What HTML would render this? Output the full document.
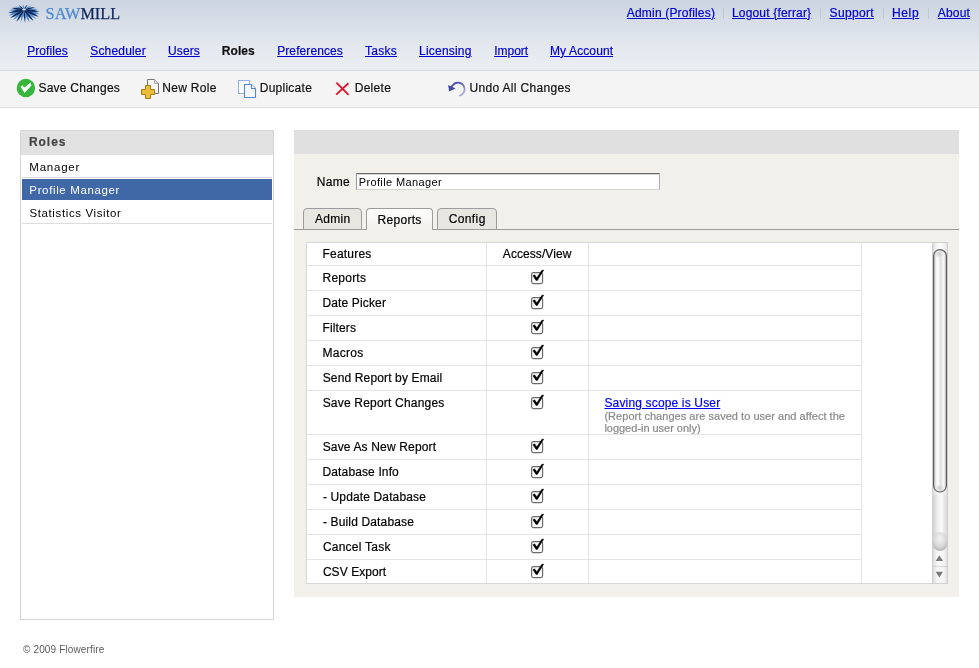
<!DOCTYPE html>
<html><head><meta charset="utf-8">
<style>
*{box-sizing:border-box;margin:0;padding:0}
html,body{width:979px;height:668px;overflow:hidden;background:#fff;font-family:"Liberation Sans",sans-serif;font-size:12px;color:#000}
.t{position:absolute;white-space:nowrap;line-height:16px;font-family:"Liberation Sans",sans-serif;-webkit-text-stroke:0.2px currentColor}
.a{position:absolute}
svg{position:absolute;overflow:visible}
</style></head><body>
<!-- header -->
<div class="a" style="left:0;top:0;width:979px;height:70px;background:linear-gradient(#cbd4e0 0px,#d6dde7 20px,#e3e8ee 45px,#ebeef3 69px)"></div>
<div class="a" style="left:0;top:70px;width:979px;height:1px;background:#d2d9e1"></div>
<div class="a" style="left:0;top:71px;width:979px;height:36px;background:#f4f4f4"></div>
<div class="a" style="left:0;top:107px;width:979px;height:1px;background:#dedede"></div>
<!-- separators -->
<div class="a" style="left:723px;top:8px;width:1px;height:11px;background:#bfc7d1"></div>
<div class="a" style="left:820px;top:8px;width:1px;height:11px;background:#bfc7d1"></div>
<div class="a" style="left:883px;top:8px;width:1px;height:11px;background:#bfc7d1"></div>
<div class="a" style="left:928px;top:8px;width:1px;height:11px;background:#bfc7d1"></div>
<!-- logo -->
<svg style="left:0;top:0;will-change:transform" width="130" height="30" viewBox="0 0 130 30">
  <g><path d="M23.95 9.99 Q31.37 14.02 39.86 14.26 Q32.49 10.05 24.05 9.61Z" fill="#4a88d2"/>
<path d="M23.88 9.96 Q29.18 16.10 36.73 19.17 Q31.55 12.88 24.12 9.64Z" fill="#4a88d2"/>
<path d="M23.82 9.88 Q25.14 16.79 29.56 22.31 Q28.42 15.33 24.18 9.72Z" fill="#4a88d2"/>
<path d="M23.81 9.75 Q20.61 15.80 20.62 22.69 Q24.01 16.69 24.19 9.85Z" fill="#4a88d2"/>
<path d="M23.86 9.65 Q17.06 13.56 12.76 20.18 Q19.70 16.42 24.14 9.95Z" fill="#4a88d2"/>
<path d="M23.93 9.61 Q15.51 10.75 8.46 15.58 Q16.95 14.63 24.07 9.99Z" fill="#4a88d2"/>
<path d="M23.99 9.60 Q16.48 8.17 9.10 10.35 Q16.62 11.98 24.01 10.00Z" fill="#4a88d2"/>
<path d="M24.07 9.61 Q19.76 6.61 14.47 6.15 Q18.71 9.34 23.93 9.99Z" fill="#4a88d2"/>
<path d="M24.20 9.76 Q24.43 6.86 22.87 4.32 Q22.44 7.27 23.80 9.84Z" fill="#4a88d2"/>
<path d="M24.10 9.97 Q28.47 8.77 31.62 5.44 Q27.15 6.47 23.90 9.63Z" fill="#4a88d2"/>
<path d="M24.01 10.00 Q31.06 11.29 37.96 9.14 Q30.89 7.65 23.99 9.60Z" fill="#4a88d2"/>
<path d="M23.91 9.98 Q30.57 15.19 38.90 16.85 Q32.33 11.46 24.09 9.62Z" fill="#0d2759"/>
<path d="M23.85 9.93 Q27.32 16.65 33.53 21.05 Q30.21 14.20 24.15 9.67Z" fill="#0d2759"/>
<path d="M23.80 9.82 Q22.83 16.49 25.13 22.88 Q26.30 16.19 24.20 9.78Z" fill="#0d2759"/>
<path d="M23.83 9.69 Q18.64 14.79 16.38 21.76 Q21.74 16.77 24.17 9.91Z" fill="#0d2759"/>
<path d="M23.90 9.63 Q15.99 12.18 10.04 18.06 Q18.06 15.68 24.10 9.97Z" fill="#0d2759"/>
<path d="M23.96 9.60 Q15.68 9.37 8.14 12.94 Q16.46 13.36 24.04 10.00Z" fill="#0d2759"/>
<path d="M24.03 9.60 Q17.87 7.22 11.27 8.03 Q17.40 10.61 23.97 10.00Z" fill="#0d2759"/>
<path d="M24.13 9.65 Q22.01 6.45 18.44 4.89 Q20.43 8.24 23.87 9.95Z" fill="#0d2759"/>
<path d="M24.17 9.91 Q26.60 7.74 27.38 4.51 Q24.78 6.57 23.83 9.69Z" fill="#0d2759"/>
<path d="M24.05 9.99 Q30.00 9.96 35.24 7.02 Q29.24 6.87 23.95 9.61Z" fill="#0d2759"/>
<path d="M23.98 10.00 Q31.54 12.68 39.54 11.62 Q32.00 8.74 24.02 9.60Z" fill="#0d2759"/>
<ellipse cx="24" cy="9.6" rx="1.8" ry="0.9" fill="#e8eef6"/></g>
  <text x="45.6" y="19.2" font-family="Liberation Serif" font-size="16.8" textLength="74.5" lengthAdjust="spacingAndGlyphs" fill="#4d88cc" stroke="#4d88cc" stroke-width="0.25">SAW<tspan fill="#12285c" stroke="#12285c">MILL</tspan></text>
</svg>
<!-- toolbar icons -->
<svg style="left:0;top:71px" width="600" height="36" viewBox="0 71 600 36">
  <circle cx="25.9" cy="88" r="9.2" fill="#37b63c"/>
  <path d="M20.6 86.8 L22.4 85.2 L24.6 87.6 L30.6 82.6 L31.4 85.4 L24.6 92.9 Z" fill="#fff"/>
  <!-- new role -->
  <path d="M147.5 79.5 H154.5 L158.5 83.5 V93.5 H147.5 Z" fill="#f6f6f6" stroke="#777" stroke-width="1"/>
  <path d="M154.5 79.5 V83.5 H158.5" fill="#ddd" stroke="#999" stroke-width="0.8"/>
  <path d="M145.5 85.5 H150.5 V89.5 H154.5 V94.5 H150.5 V98.5 H145.5 V94.5 H141.5 V89.5 H145.5 Z" fill="#ebbd38" stroke="#a47c10" stroke-width="1"/>
  <!-- duplicate -->
  <rect x="238.5" y="80.5" width="11" height="13" fill="#fbfbfb" stroke="#92b1e2" stroke-width="1"/>
  <path d="M244.5 84.5 H251.5 L255.5 88.5 V97.5 H244.5 Z" fill="#f6f6f6" stroke="#5b86d0" stroke-width="1.1"/>
  <path d="M251.5 84.5 V88.5 H255.5" fill="#fff" stroke="#5b86d0" stroke-width="1.1"/>
  <!-- delete -->
  <path d="M336.4 82.6 L348.6 94.8 M348.4 83.2 L336.2 94.6" stroke="#dc1a2c" stroke-width="1.9" stroke-linecap="butt"/>
  <!-- undo -->
  <defs><linearGradient id="ug" gradientUnits="userSpaceOnUse" x1="452" y1="84" x2="462" y2="96"><stop offset="0" stop-color="#4040a0"/><stop offset="0.5" stop-color="#7070bc"/><stop offset="1" stop-color="#b4b4dc"/></linearGradient></defs>
  <path d="M450.8 87.6 L452.5 85.6 A6.6 6.6 0 1 1 459.4 95.7" fill="none" stroke="url(#ug)" stroke-width="1.7"/>
  <path d="M448.1 85.1 L449.3 91.6 L455.6 88.5 Z" fill="#4646a4"/>
</svg>
<!-- left panel -->
<div class="a" style="left:20px;top:130px;width:254px;height:490px;border:1px solid #d5d5d5;background:#fff"></div>
<div class="a" style="left:21px;top:131px;width:252px;height:24px;background:#e1e1e1"></div>
<div class="a" style="left:22px;top:177px;width:250px;height:1px;background:#dcdcdc"></div>
<div class="a" style="left:22px;top:179px;width:250px;height:21px;background:#4068a7"></div>
<div class="a" style="left:22px;top:223px;width:250px;height:1px;background:#dcdcdc"></div>
<!-- right panel -->
<div class="a" style="left:294px;top:130px;width:665px;height:467px;background:#f1f0ea"></div>
<div class="a" style="left:294px;top:130px;width:665px;height:24px;background:#e0e0e0"></div>
<!-- input -->
<div class="a" style="left:356px;top:173px;width:304px;height:17px;background:#fff;border:1px solid #9a9a9a;border-top-color:#6a6a6a;border-right-color:#b0b0b0;border-bottom-color:#d4d4d4;box-shadow:inset 0 1px 0 #d6d6d6"></div>
<!-- tabs -->
<div class="a" style="left:294px;top:229px;width:665px;height:1px;background:#9c9c9c"></div>
<div class="a" style="left:303px;top:208px;width:59px;height:22px;background:#e8e6e0;border:1px solid #9c9c9c;border-radius:4px 4px 0 0"></div>
<div class="a" style="left:366px;top:208px;width:67px;height:22px;background:linear-gradient(#fdfdfc,#f1f0ea);border:1px solid #9c9c9c;border-bottom:none;border-radius:4px 4px 0 0"></div>
<div class="a" style="left:437px;top:208px;width:60px;height:22px;background:#e8e6e0;border:1px solid #9c9c9c;border-radius:4px 4px 0 0"></div>
<!-- table -->
<div class="a" style="left:306px;top:242px;width:642px;height:342px;background:#fff;border:1px solid #d7d7d7"></div>
<div class="a" style="left:307px;top:265px;width:555px;height:1px;background:#e4e4e4"></div>
<div class="a" style="left:307px;top:290px;width:555px;height:1px;background:#e4e4e4"></div>
<div class="a" style="left:307px;top:315px;width:555px;height:1px;background:#e4e4e4"></div>
<div class="a" style="left:307px;top:340px;width:555px;height:1px;background:#e4e4e4"></div>
<div class="a" style="left:307px;top:365px;width:555px;height:1px;background:#e4e4e4"></div>
<div class="a" style="left:307px;top:390px;width:555px;height:1px;background:#e4e4e4"></div>
<div class="a" style="left:307px;top:434px;width:555px;height:1px;background:#e4e4e4"></div>
<div class="a" style="left:307px;top:459px;width:555px;height:1px;background:#e4e4e4"></div>
<div class="a" style="left:307px;top:484px;width:555px;height:1px;background:#e4e4e4"></div>
<div class="a" style="left:307px;top:509px;width:555px;height:1px;background:#e4e4e4"></div>
<div class="a" style="left:307px;top:534px;width:555px;height:1px;background:#e4e4e4"></div>
<div class="a" style="left:307px;top:559px;width:555px;height:1px;background:#e4e4e4"></div>
<div class="a" style="left:486px;top:243px;width:1px;height:340px;background:#e4e4e4"></div>
<div class="a" style="left:588px;top:243px;width:1px;height:340px;background:#e4e4e4"></div>
<div class="a" style="left:861px;top:243px;width:1px;height:340px;background:#e4e4e4"></div>
<svg style="left:528px;top:265px" width="20" height="24" viewBox="0 0 20 24"><rect x="3.6" y="7.6" width="11" height="11" rx="1.8" fill="#fafafa" stroke="#6c6c6c" stroke-width="1.2"/><path d="M4.9 10.7 L6.6 9.8 L8.8 12.8 L13.8 5.3 L15.8 5.1 L9.4 15.4 L8.0 15.4 Z" fill="#000" stroke="#000" stroke-width="0.4"/></svg>
<svg style="left:528px;top:290px" width="20" height="24" viewBox="0 0 20 24"><rect x="3.6" y="7.6" width="11" height="11" rx="1.8" fill="#fafafa" stroke="#6c6c6c" stroke-width="1.2"/><path d="M4.9 10.7 L6.6 9.8 L8.8 12.8 L13.8 5.3 L15.8 5.1 L9.4 15.4 L8.0 15.4 Z" fill="#000" stroke="#000" stroke-width="0.4"/></svg>
<svg style="left:528px;top:315px" width="20" height="24" viewBox="0 0 20 24"><rect x="3.6" y="7.6" width="11" height="11" rx="1.8" fill="#fafafa" stroke="#6c6c6c" stroke-width="1.2"/><path d="M4.9 10.7 L6.6 9.8 L8.8 12.8 L13.8 5.3 L15.8 5.1 L9.4 15.4 L8.0 15.4 Z" fill="#000" stroke="#000" stroke-width="0.4"/></svg>
<svg style="left:528px;top:340px" width="20" height="24" viewBox="0 0 20 24"><rect x="3.6" y="7.6" width="11" height="11" rx="1.8" fill="#fafafa" stroke="#6c6c6c" stroke-width="1.2"/><path d="M4.9 10.7 L6.6 9.8 L8.8 12.8 L13.8 5.3 L15.8 5.1 L9.4 15.4 L8.0 15.4 Z" fill="#000" stroke="#000" stroke-width="0.4"/></svg>
<svg style="left:528px;top:365px" width="20" height="24" viewBox="0 0 20 24"><rect x="3.6" y="7.6" width="11" height="11" rx="1.8" fill="#fafafa" stroke="#6c6c6c" stroke-width="1.2"/><path d="M4.9 10.7 L6.6 9.8 L8.8 12.8 L13.8 5.3 L15.8 5.1 L9.4 15.4 L8.0 15.4 Z" fill="#000" stroke="#000" stroke-width="0.4"/></svg>
<svg style="left:528px;top:390px" width="20" height="24" viewBox="0 0 20 24"><rect x="3.6" y="7.6" width="11" height="11" rx="1.8" fill="#fafafa" stroke="#6c6c6c" stroke-width="1.2"/><path d="M4.9 10.7 L6.6 9.8 L8.8 12.8 L13.8 5.3 L15.8 5.1 L9.4 15.4 L8.0 15.4 Z" fill="#000" stroke="#000" stroke-width="0.4"/></svg>
<svg style="left:528px;top:434px" width="20" height="24" viewBox="0 0 20 24"><rect x="3.6" y="7.6" width="11" height="11" rx="1.8" fill="#fafafa" stroke="#6c6c6c" stroke-width="1.2"/><path d="M4.9 10.7 L6.6 9.8 L8.8 12.8 L13.8 5.3 L15.8 5.1 L9.4 15.4 L8.0 15.4 Z" fill="#000" stroke="#000" stroke-width="0.4"/></svg>
<svg style="left:528px;top:459px" width="20" height="24" viewBox="0 0 20 24"><rect x="3.6" y="7.6" width="11" height="11" rx="1.8" fill="#fafafa" stroke="#6c6c6c" stroke-width="1.2"/><path d="M4.9 10.7 L6.6 9.8 L8.8 12.8 L13.8 5.3 L15.8 5.1 L9.4 15.4 L8.0 15.4 Z" fill="#000" stroke="#000" stroke-width="0.4"/></svg>
<svg style="left:528px;top:484px" width="20" height="24" viewBox="0 0 20 24"><rect x="3.6" y="7.6" width="11" height="11" rx="1.8" fill="#fafafa" stroke="#6c6c6c" stroke-width="1.2"/><path d="M4.9 10.7 L6.6 9.8 L8.8 12.8 L13.8 5.3 L15.8 5.1 L9.4 15.4 L8.0 15.4 Z" fill="#000" stroke="#000" stroke-width="0.4"/></svg>
<svg style="left:528px;top:509px" width="20" height="24" viewBox="0 0 20 24"><rect x="3.6" y="7.6" width="11" height="11" rx="1.8" fill="#fafafa" stroke="#6c6c6c" stroke-width="1.2"/><path d="M4.9 10.7 L6.6 9.8 L8.8 12.8 L13.8 5.3 L15.8 5.1 L9.4 15.4 L8.0 15.4 Z" fill="#000" stroke="#000" stroke-width="0.4"/></svg>
<svg style="left:528px;top:534px" width="20" height="24" viewBox="0 0 20 24"><rect x="3.6" y="7.6" width="11" height="11" rx="1.8" fill="#fafafa" stroke="#6c6c6c" stroke-width="1.2"/><path d="M4.9 10.7 L6.6 9.8 L8.8 12.8 L13.8 5.3 L15.8 5.1 L9.4 15.4 L8.0 15.4 Z" fill="#000" stroke="#000" stroke-width="0.4"/></svg>
<svg style="left:528px;top:559px" width="20" height="24" viewBox="0 0 20 24"><rect x="3.6" y="7.6" width="11" height="11" rx="1.8" fill="#fafafa" stroke="#6c6c6c" stroke-width="1.2"/><path d="M4.9 10.7 L6.6 9.8 L8.8 12.8 L13.8 5.3 L15.8 5.1 L9.4 15.4 L8.0 15.4 Z" fill="#000" stroke="#000" stroke-width="0.4"/></svg>
<!-- scrollbar -->
<svg style="left:932px;top:242px" width="16" height="342" viewBox="0 0 16 342">
<defs>
<linearGradient id="trk" x1="0" x2="1" y1="0" y2="0"><stop offset="0" stop-color="#d6d6d6"/><stop offset="0.25" stop-color="#f3f3f3"/><stop offset="0.5" stop-color="#fbfbfb"/><stop offset="0.8" stop-color="#f2f2f2"/><stop offset="1" stop-color="#dcdcdc"/></linearGradient>
<linearGradient id="thm" x1="0" x2="1" y1="0" y2="0"><stop offset="0" stop-color="#bdbdbd"/><stop offset="0.2" stop-color="#f4f4f4"/><stop offset="0.35" stop-color="#fdfdfd"/><stop offset="0.55" stop-color="#dedede"/><stop offset="0.8" stop-color="#fafafa"/><stop offset="1" stop-color="#c4c4c4"/></linearGradient>
<linearGradient id="low" x1="0" x2="1" y1="0" y2="0"><stop offset="0" stop-color="#cfcfcf"/><stop offset="0.3" stop-color="#eeeeee"/><stop offset="0.6" stop-color="#fafafa"/><stop offset="1" stop-color="#d8d8d8"/></linearGradient>
<radialGradient id="cap" cx="0.5" cy="0.35" r="0.65"><stop offset="0" stop-color="#f2f2f2"/><stop offset="0.7" stop-color="#d6d6d6"/><stop offset="1" stop-color="#b4b4b4"/></radialGradient><radialGradient id="tcap" cx="0.45" cy="0.5" r="0.6"><stop offset="0" stop-color="#c8c8c8"/><stop offset="1" stop-color="#e8e8e8" stop-opacity="0"/></radialGradient>
</defs>
<rect x="0.5" y="0.5" width="15" height="341" fill="url(#trk)" stroke="#d0d0d0" stroke-width="1"/>
<rect x="1" y="250" width="14" height="59" rx="7" fill="url(#low)"/>
<rect x="1" y="290" width="14" height="19" rx="7" fill="url(#cap)"/>
<rect x="1.6" y="7.6" width="12.8" height="242.4" rx="6.4" fill="url(#thm)" stroke="#5c5c5c" stroke-width="1.2"/><ellipse cx="7.6" cy="12" rx="5" ry="4" fill="url(#tcap)"/><ellipse cx="8" cy="246" rx="5.5" ry="3.5" fill="url(#tcap)"/>
<path d="M3.7 319 L11 319 L7.35 313.3 Z" fill="#7a7a7a"/>
<rect x="1" y="324" width="14" height="1" fill="#d4d4d4"/>
<path d="M3.7 329.8 L11 329.8 L7.35 335.4 Z" fill="#7a7a7a"/>
</svg>
<div style="position:absolute;left:0;top:0;width:979px;height:668px;will-change:transform">
<span class="t" style="left:626.82px;top:4.80px;font-size:12px;color:#0000cc;letter-spacing:0.182px;text-decoration:underline">Admin (Profiles)</span>
<span class="t" style="left:732.03px;top:4.80px;font-size:12px;color:#0000cc;letter-spacing:0.166px;text-decoration:underline">Logout {ferrar}</span>
<span class="t" style="left:829.56px;top:4.80px;font-size:12px;color:#0000cc;letter-spacing:0.338px;text-decoration:underline">Support</span>
<span class="t" style="left:891.93px;top:4.80px;font-size:12px;color:#0000cc;letter-spacing:0.655px;text-decoration:underline">Help</span>
<span class="t" style="left:937.72px;top:4.80px;font-size:12px;color:#0000cc;letter-spacing:0.220px;text-decoration:underline">About</span>
<span class="t" style="left:27.20px;top:42.90px;font-size:12px;color:#0000cc;letter-spacing:0.073px;text-decoration:underline">Profiles</span>
<span class="t" style="left:90.20px;top:42.90px;font-size:12px;color:#0000cc;letter-spacing:0.184px;text-decoration:underline">Scheduler</span>
<span class="t" style="left:168.10px;top:42.90px;font-size:12px;color:#0000cc;letter-spacing:0.071px;text-decoration:underline">Users</span>
<span class="t" style="left:221.86px;top:42.90px;font-size:12px;color:#111111;letter-spacing:0.023px;font-weight:700">Roles</span>
<span class="t" style="left:277.20px;top:42.90px;font-size:12px;color:#0000cc;letter-spacing:0.091px;text-decoration:underline">Preferences</span>
<span class="t" style="left:365.10px;top:42.90px;font-size:12px;color:#0000cc;letter-spacing:0.223px;text-decoration:underline">Tasks</span>
<span class="t" style="left:419.10px;top:42.90px;font-size:12px;color:#0000cc;letter-spacing:0.200px;text-decoration:underline">Licensing</span>
<span class="t" style="left:494.20px;top:42.90px;font-size:12px;color:#0000cc;letter-spacing:-0.019px;text-decoration:underline">Import</span>
<span class="t" style="left:550.00px;top:42.90px;font-size:12px;color:#0000cc;letter-spacing:0.117px;text-decoration:underline">My Account</span>
<span class="t" style="left:38.46px;top:80.00px;font-size:12px;color:#111111;letter-spacing:0.242px">Save Changes</span>
<span class="t" style="left:162.33px;top:80.00px;font-size:12px;color:#111111;letter-spacing:0.294px">New Role</span>
<span class="t" style="left:259.73px;top:80.00px;font-size:12px;color:#111111;letter-spacing:0.257px">Duplicate</span>
<span class="t" style="left:354.73px;top:80.00px;font-size:12px;color:#111111;letter-spacing:0.281px">Delete</span>
<span class="t" style="left:469.44px;top:80.00px;font-size:12px;color:#111111;letter-spacing:0.326px">Undo All Changes</span>
<span class="t" style="left:28.96px;top:133.90px;font-size:12px;color:#444444;letter-spacing:0.948px;font-weight:700">Roles</span>
<span class="t" style="left:29.36px;top:159.10px;font-size:11.5px;color:#000000;letter-spacing:0.765px;-webkit-text-stroke:0px">Manager</span>
<span class="t" style="left:29.36px;top:182.20px;font-size:11.5px;color:#ffffff;letter-spacing:0.628px;-webkit-text-stroke:0px">Profile Manager</span>
<span class="t" style="left:29.45px;top:204.70px;font-size:11.5px;color:#000000;letter-spacing:0.616px;-webkit-text-stroke:0px">Statistics Visitor</span>
<span class="t" style="left:316.63px;top:174.00px;font-size:12px;color:#000000;letter-spacing:0.387px">Name</span>
<span class="t" style="left:358.69px;top:173.80px;font-size:11px;color:#000000;letter-spacing:0.375px;-webkit-text-stroke:0px">Profile Manager</span>
<span class="t" style="left:314.92px;top:210.80px;font-size:12px;color:#000000;letter-spacing:0.319px">Admin</span>
<span class="t" style="left:377.43px;top:211.70px;font-size:12px;color:#000000;letter-spacing:0.317px">Reports</span>
<span class="t" style="left:448.68px;top:211.00px;font-size:12px;color:#000000;letter-spacing:0.389px">Config</span>
<span class="t" style="left:322.53px;top:245.90px;font-size:12px;color:#000000;letter-spacing:0.201px">Features</span>
<span class="t" style="left:502.82px;top:245.90px;font-size:12px;color:#000000;letter-spacing:0.074px">Access/View</span>
<span class="t" style="left:322.53px;top:270.20px;font-size:12px;color:#000000;letter-spacing:0.234px">Reports</span>
<span class="t" style="left:322.53px;top:295.10px;font-size:12px;color:#000000;letter-spacing:0.134px">Date Picker</span>
<span class="t" style="left:322.53px;top:320.00px;font-size:12px;color:#000000;letter-spacing:0.116px">Filters</span>
<span class="t" style="left:322.53px;top:344.80px;font-size:12px;color:#000000;letter-spacing:0.282px">Macros</span>
<span class="t" style="left:322.66px;top:369.70px;font-size:12px;color:#000000;letter-spacing:0.146px">Send Report by Email</span>
<span class="t" style="left:322.66px;top:395.00px;font-size:12px;color:#000000;letter-spacing:0.198px">Save Report Changes</span>
<span class="t" style="left:322.66px;top:438.80px;font-size:12px;color:#000000;letter-spacing:0.156px">Save As New Report</span>
<span class="t" style="left:322.53px;top:463.60px;font-size:12px;color:#000000;letter-spacing:0.130px">Database Info</span>
<span class="t" style="left:322.98px;top:488.60px;font-size:12px;color:#000000;letter-spacing:0.134px">- Update Database</span>
<span class="t" style="left:322.98px;top:513.60px;font-size:12px;color:#000000;letter-spacing:0.143px">- Build Database</span>
<span class="t" style="left:322.88px;top:538.60px;font-size:12px;color:#000000;letter-spacing:0.236px">Cancel Task</span>
<span class="t" style="left:322.88px;top:563.70px;font-size:12px;color:#000000;letter-spacing:0.067px">CSV Export</span>
<span class="t" style="left:604.46px;top:394.50px;font-size:12px;color:#0000ee;letter-spacing:0.157px;text-decoration:underline">Saving scope is User</span>
<span class="t" style="left:604.41px;top:407.60px;font-size:11px;color:#888888;letter-spacing:0.036px">(Report changes are saved to user and affect the</span>
<span class="t" style="left:604.40px;top:419.50px;font-size:11px;color:#888888;letter-spacing:-0.019px">logged-in user only)</span>
<span class="t" style="left:23.06px;top:641.80px;font-size:10px;color:#5a5a5a;letter-spacing:0.136px;-webkit-text-stroke:0px">© 2009 Flowerfire</span>
</div>
</body></html>
